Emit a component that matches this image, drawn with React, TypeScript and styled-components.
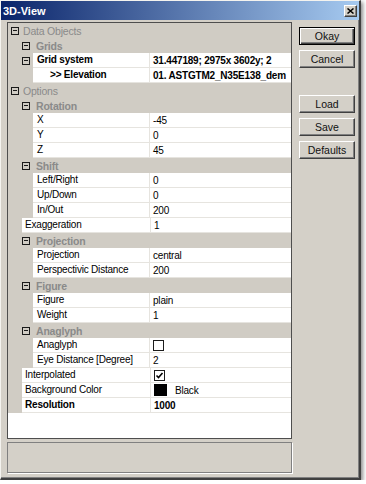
import React from "react";
import styled, { createGlobalStyle } from "styled-components";

const GlobalStyle = createGlobalStyle`
  body {
    margin: 0;
    background: #fff;
    font-family: "Liberation Sans", Arial, sans-serif;
    font-size: 10px;
  }
`;

const FACE = "#d4d0c8";
const CAPTION = "#d0ccc4";
const LINE = "#e6e4df";

const Window = styled.div`
  box-sizing: border-box;
  width: 361px;
  height: 480px;
  background: ${FACE};
  border-style: solid;
  border-width: 1px 2px 2px 1px;
  border-color: #f4f3ef #404040 #404040 #f4f3ef;
  box-shadow: inset -1px -1px 0 #808080, 2px 2px 4px rgba(0, 0, 0, 0.45);
  display: flex;
  flex-direction: column;
`;

const TitleBar = styled.div`
  height: 19px;
  display: flex;
  align-items: center;
  padding: 0 2px 0 2px;
  background: linear-gradient(to right, #0a246a, #a6caf0);
`;

const Title = styled.span`
  color: #fff;
  font-weight: bold;
  font-size: 11px;
`;

const CloseButton = styled.div`
  box-sizing: border-box;
  margin-left: auto;
  width: 13px;
  height: 12px;
  background: ${FACE};
  border: 1px solid;
  border-color: #fff #404040 #404040 #fff;
  box-shadow: inset -1px -1px 0 #808080;
  display: flex;
  align-items: center;
  justify-content: center;
`;

const Body = styled.div`
  flex: 1;
  display: flex;
  gap: 7px;
  padding: 2px 0 0 6px;
`;

const LeftColumn = styled.div`
  width: 285px;
  display: flex;
  flex-direction: column;
`;

const Grid = styled.div`
  box-sizing: border-box;
  height: 417px;
  border: 1px solid #4e4e4e;
  background: #fff;
  overflow: hidden;
  letter-spacing: -0.2px;
`;

const StatusBox = styled.div`
  box-sizing: border-box;
  margin-top: 3px;
  height: 31px;
  border: 1px solid #808080;
  box-shadow: 1px 1px 0 #fff;
`;

const ButtonColumn = styled.div`
  display: flex;
  flex-direction: column;
  gap: 5px;
  padding-top: 5px;
`;

const Button = styled.button<{ $default?: boolean; $gapBefore?: number }>`
  box-sizing: border-box;
  width: 56px;
  height: 18px;
  padding: 0;
  margin-top: ${(p) => p.$gapBefore ?? 0}px;
  font-family: "Liberation Sans", Arial, sans-serif;
  font-size: 10.5px;
  color: #111;
  background: ${FACE};
  border: 1px solid;
  border-color: ${(p) => (p.$default ? "#000" : "#fff #404040 #404040 #fff")};
  box-shadow: ${(p) =>
    p.$default
      ? "inset 1px 1px 0 #fff, inset -1px -1px 0 #404040, inset -2px -2px 0 #808080"
      : "inset -1px -1px 0 #808080"};
`;

const CategoryRow = styled.div<{ $level: number }>`
  height: 15px;
  display: flex;
  align-items: center;
  background: ${CAPTION};
  padding-left: ${(p) => (p.$level === 0 ? 3 : 14)}px;
`;

const CategoryLabel = styled.span<{ $level: number }>`
  color: #8a8a8a;
  font-size: 10.5px;
  font-weight: ${(p) => (p.$level === 0 ? "normal" : "bold")};
  margin-left: ${(p) => (p.$level === 0 ? 4 : 6)}px;
`;

const Expander = styled.span`
  position: relative;
  box-sizing: border-box;
  width: 8px;
  height: 8px;
  border: 1px solid #1a1a1a;
  flex: none;
  &::after {
    content: "";
    position: absolute;
    left: 1px;
    right: 1px;
    top: 2px;
    height: 1px;
    background: #1a1a1a;
  }
`;

const PropRow = styled.div`
  height: 15px;
  display: flex;
`;

const Gutter = styled.div<{ $width: number }>`
  width: ${(p) => p.$width}px;
  flex: none;
  background: ${CAPTION};
  display: flex;
  align-items: center;
  padding-left: 14px;
  box-sizing: border-box;
`;

const Cells = styled.div`
  flex: 1;
  display: flex;
  min-width: 0;
  border-bottom: 1px solid ${LINE};
`;

const NameCell = styled.div<{ $width: number; $indent: number; $bold?: boolean }>`
  box-sizing: border-box;
  width: ${(p) => p.$width}px;
  flex: none;
  border-right: 1px solid ${LINE};
  padding-left: ${(p) => p.$indent}px;
  line-height: 14px;
  white-space: nowrap;
  overflow: hidden;
  font-weight: ${(p) => (p.$bold ? "bold" : "normal")};
  color: #000;
`;

const ValueCell = styled.div<{ $bold?: boolean }>`
  flex: 1;
  min-width: 0;
  padding-left: 3px;
  display: flex;
  align-items: center;
  gap: 8px;
  white-space: nowrap;
  overflow: hidden;
  font-weight: ${(p) => (p.$bold ? "bold" : "normal")};
  color: #000;
`;

const CheckBox = styled.span`
  box-sizing: border-box;
  width: 11px;
  height: 11px;
  border: 1px solid #1c1c1c;
  background: #fff;
  display: flex;
  align-items: center;
  justify-content: center;
  flex: none;
`;

const Swatch = styled.span`
  width: 13px;
  height: 12px;
  background: #000;
  flex: none;
`;

type Row =
  | { kind: "cat"; level: number; label: string }
  | {
      kind: "prop";
      level: number;
      label: string;
      value?: string;
      bold?: boolean;
      indent?: number;
      expander?: boolean;
      check?: boolean;
      color?: string;
    };

const rows: Row[] = [
  { kind: "cat", level: 0, label: "Data Objects" },
  { kind: "cat", level: 1, label: "Grids" },
  { kind: "prop", level: 2, label: "Grid system", value: "31.447189; 2975x 3602y; 2", bold: true, expander: true },
  { kind: "prop", level: 2, label: ">> Elevation", value: "01. ASTGTM2_N35E138_dem", bold: true, indent: 17 },
  { kind: "cat", level: 0, label: "Options" },
  { kind: "cat", level: 1, label: "Rotation" },
  { kind: "prop", level: 2, label: "X", value: "-45" },
  { kind: "prop", level: 2, label: "Y", value: "0" },
  { kind: "prop", level: 2, label: "Z", value: "45" },
  { kind: "cat", level: 1, label: "Shift" },
  { kind: "prop", level: 2, label: "Left/Right", value: "0" },
  { kind: "prop", level: 2, label: "Up/Down", value: "0" },
  { kind: "prop", level: 2, label: "In/Out", value: "200" },
  { kind: "prop", level: 1, label: "Exaggeration", value: "1" },
  { kind: "cat", level: 1, label: "Projection" },
  { kind: "prop", level: 2, label: "Projection", value: "central" },
  { kind: "prop", level: 2, label: "Perspectivic Distance", value: "200" },
  { kind: "cat", level: 1, label: "Figure" },
  { kind: "prop", level: 2, label: "Figure", value: "plain" },
  { kind: "prop", level: 2, label: "Weight", value: "1" },
  { kind: "cat", level: 1, label: "Anaglyph" },
  { kind: "prop", level: 2, label: "Anaglyph", check: false },
  { kind: "prop", level: 2, label: "Eye Distance [Degree]", value: "2" },
  { kind: "prop", level: 1, label: "Interpolated", check: true },
  { kind: "prop", level: 1, label: "Background Color", color: "Black" },
  { kind: "prop", level: 1, label: "Resolution", value: "1000", bold: true },
];

function CheckMark() {
  return (
    <svg width="9" height="9" viewBox="0 0 9 9">
      <path d="M1.5 4.5 L3.5 6.5 L7.5 2" fill="none" stroke="#000" strokeWidth="1.6" />
    </svg>
  );
}

function CloseGlyph() {
  return (
    <svg width="7" height="6" viewBox="0 0 7 6">
      <path d="M0.5 0.5 L6.5 5.5 M6.5 0.5 L0.5 5.5" stroke="#000" strokeWidth="1.5" />
    </svg>
  );
}

function GridRow({ row }: { row: Row }) {
  if (row.kind === "cat") {
    return (
      <CategoryRow $level={row.level}>
        <Expander />
        <CategoryLabel $level={row.level}>{row.label}</CategoryLabel>
      </CategoryRow>
    );
  }
  const gutter = row.level === 1 ? 13 : 25;
  return (
    <PropRow>
      <Gutter $width={gutter}>{row.expander && <Expander />}</Gutter>
      <Cells>
        <NameCell $width={142 - gutter} $indent={row.indent ?? (row.level === 1 ? 3 : 4)} $bold={row.bold}>
          {row.label}
        </NameCell>
        <ValueCell $bold={row.bold}>
          {row.check !== undefined && <CheckBox>{row.check && <CheckMark />}</CheckBox>}
          {row.color && <Swatch />}
          {row.color ?? row.value}
        </ValueCell>
      </Cells>
    </PropRow>
  );
}

export default function App() {
  return (
    <>
      <GlobalStyle />
      <Window>
        <TitleBar>
          <Title>3D-View</Title>
          <CloseButton>
            <CloseGlyph />
          </CloseButton>
        </TitleBar>
        <Body>
          <LeftColumn>
            <Grid>
              {rows.map((r, i) => (
                <GridRow key={i} row={r} />
              ))}
            </Grid>
            <StatusBox />
          </LeftColumn>
          <ButtonColumn>
            <Button $default>Okay</Button>
            <Button>Cancel</Button>
            <Button $gapBefore={22}>Load</Button>
            <Button>Save</Button>
            <Button>Defaults</Button>
          </ButtonColumn>
        </Body>
      </Window>
    </>
  );
}
